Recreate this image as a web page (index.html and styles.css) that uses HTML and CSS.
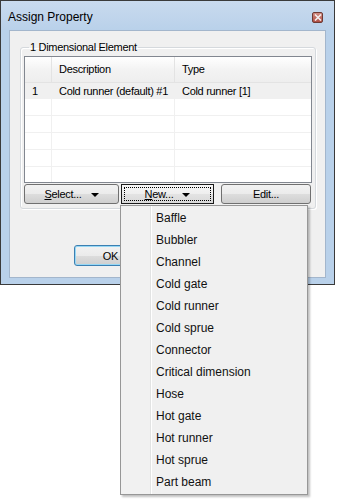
FILE: index.html
```html
<!DOCTYPE html>
<html lang="en">
<head>
  <meta charset="UTF-8" />
  <title>Assign Property</title>
  <link rel="stylesheet" href="styles.css">
</head>
<body>

  <div class="window">
    <div class="titlebar">
      <span class="title">Assign Property</span>
      <span class="close">
        <svg width="8" height="7" viewBox="0 0 8 7"><path d="M1 0.5 L7 6.5 M7 0.5 L1 6.5" stroke="#f4eeee" stroke-width="1.6"/></svg>
      </span>
    </div>

    <div class="client">
      <fieldset class="group">
        <legend>1 Dimensional Element</legend>

        <div class="list">
          <div class="row head">
            <div class="c0"></div>
            <div class="c1">Description</div>
            <div class="c2">Type</div>
          </div>
          <div class="row sel">
            <div class="c0">1</div>
            <div class="c1">Cold runner (default) #1</div>
            <div class="c2">Cold runner [1]</div>
          </div>
          <div class="row"><div class="c0"></div><div class="c1"></div><div class="c2"></div></div>
          <div class="row"><div class="c0"></div><div class="c1"></div><div class="c2"></div></div>
          <div class="row"><div class="c0"></div><div class="c1"></div><div class="c2"></div></div>
          <div class="row"><div class="c0"></div><div class="c1"></div><div class="c2"></div></div>
          <div class="row last"><div class="c0"></div><div class="c1"></div><div class="c2"></div></div>
        </div>

        <div class="buttons">
          <button class="btn b-select"><span><u>S</u>elect...</span><i class="arrow"></i></button>
          <button class="btn b-new focus"><span class="dots"><span><u>N</u>ew...</span><i class="arrow"></i></span></button>
          <button class="btn b-edit">Edit...</button>
        </div>
      </fieldset>

      <div class="footer">
        <button class="btn ok">OK</button>
        <button class="btn cancel">Cancel</button>
      </div>
    </div>
  </div>

  <ul class="menu">
    <li>Baffle</li>
    <li>Bubbler</li>
    <li>Channel</li>
    <li>Cold gate</li>
    <li>Cold runner</li>
    <li>Cold sprue</li>
    <li>Connector</li>
    <li>Critical dimension</li>
    <li>Hose</li>
    <li>Hot gate</li>
    <li>Hot runner</li>
    <li>Hot sprue</li>
    <li>Part beam</li>
  </ul>

</body>
</html>
```

FILE: styles.css
```css
* { box-sizing: border-box; }

body {
  margin: 0;
  background: #fff;
  font-family: "Liberation Sans", Arial, sans-serif;
  font-size: 11px;
  color: #000;
}

.window {
  width: 335px;
  height: 285px;
  border: 1px solid #3a3a3a;
  background: #b9d1ea;
  padding: 0 8px 7px 8px;
}

.titlebar {
  height: 29px;
  display: flex;
  align-items: center;
  justify-content: space-between;
  background: linear-gradient(#c9daee, #b9d1ea);
  margin: 0 -8px;
  padding: 2px 11px 0 7px;
}

.title {
  font-size: 12px;
  color: #000;
}

.close {
  width: 11px;
  height: 11px;
  border: 1px solid #6d3a34;
  border-radius: 2px;
  background: linear-gradient(#d08a80, #b04f45);
  display: flex;
  align-items: center;
  justify-content: center;
  margin-top: 1px;
}

.client {
  height: 248px;
  background: #f0f0f0;
  border: 1px solid #a3b6cc;
  padding: 10px 10px 0 10px;
  letter-spacing: -0.3px;
}

.group {
  margin: 0;
  width: 296px;
  border: 1px solid #d5d9dd;
  border-radius: 3px;
  padding: 2px 3px 4px 3px;
  box-shadow: inset 1px 1px 0 #fff, 1px 1px 0 #fff;
}

.group legend {
  padding: 0 1px;
  margin-left: 5px;
  line-height: 13px;
  font-size: 11px;
}

.list {
  width: 288px;
  height: 127px;
  border: 1px solid #828790;
  background: #fff;
  overflow: hidden;
}

.row {
  display: flex;
  height: 17px;
  border-bottom: 1px solid #f0f0f0;
}

.row > div {
  padding-left: 7px;
  line-height: 16px;
  white-space: nowrap;
  border-right: 1px solid #f0f0f0;
}

.c0 { width: 27px; }
.c1 { width: 123px; }
.c2 { flex: 1; border-right: none !important; }

.row.head {
  height: 26px;
  background: linear-gradient(#fff, #f3f3f3 50%, #eeeeee);
  border-bottom: 1px solid #e3e3e3;
}

.row.head > div {
  line-height: 25px;
  border-right: 1px solid #e3e3e3;
}

.row.sel {
  height: 16px;
  background: #f0f0f0;
}

.row.sel > div {
  line-height: 16px;
  border-right-color: #f0f0f0;
}

.buttons {
  display: flex;
  margin-top: 1px;
}

.btn {
  font-family: inherit;
  font-size: 11px;
  letter-spacing: -0.3px;
  color: #000;
  height: 20px;
  padding: 0;
  border: 1px solid #707070;
  border-radius: 3px;
  background: linear-gradient(#f2f2f2, #ebebeb 50%, #dddddd 51%, #cfcfcf);
  display: flex;
  align-items: center;
  justify-content: center;
  gap: 9px;
}

.b-select { width: 95px; }
.b-new { width: 93px; margin-left: 2px; }
.b-edit { width: 90px; margin-left: 7px; }

.btn.focus {
  border-color: #1a1a1a;
  border-radius: 0;
  background: linear-gradient(#f6f6f6, #eeeeee 50%, #e3e3e3 51%, #d9d9d9);
  padding: 2px;
}

.dots {
  flex: 1;
  height: 100%;
  border: 1px dotted #000;
  display: flex;
  align-items: center;
  justify-content: center;
  gap: 9px;
}

.arrow {
  width: 0;
  height: 0;
  border-left: 4px solid transparent;
  border-right: 4px solid transparent;
  border-top: 4px solid #000;
  margin-top: 1px;
}

.footer {
  display: flex;
  margin-top: 36px;
  padding-left: 54px;
  gap: 85px;
}

.ok {
  width: 73px;
  height: 21px;
  border-color: #3c7fb1;
  box-shadow: inset 0 0 0 1px #97d8f5;
}

.cancel {
  width: 75px;
  height: 21px;
}

.menu {
  position: absolute;
  left: 120px;
  top: 205px;
  width: 188px;
  margin: 0;
  padding: 1px;
  list-style: none;
  border: 1px solid #979797;
  background: linear-gradient(90deg, #f1f1f1 29px, #e2e3e3 29px, #e2e3e3 30px, #fff 30px, #fff 31px, #f0f0f0 31px);
  box-shadow: 2px 2px 2px rgba(0, 0, 0, 0.25);
  font-size: 12px;
  color: #111;
}

.menu li {
  height: 22px;
  line-height: 23px;
  padding-left: 34px;
}
```
